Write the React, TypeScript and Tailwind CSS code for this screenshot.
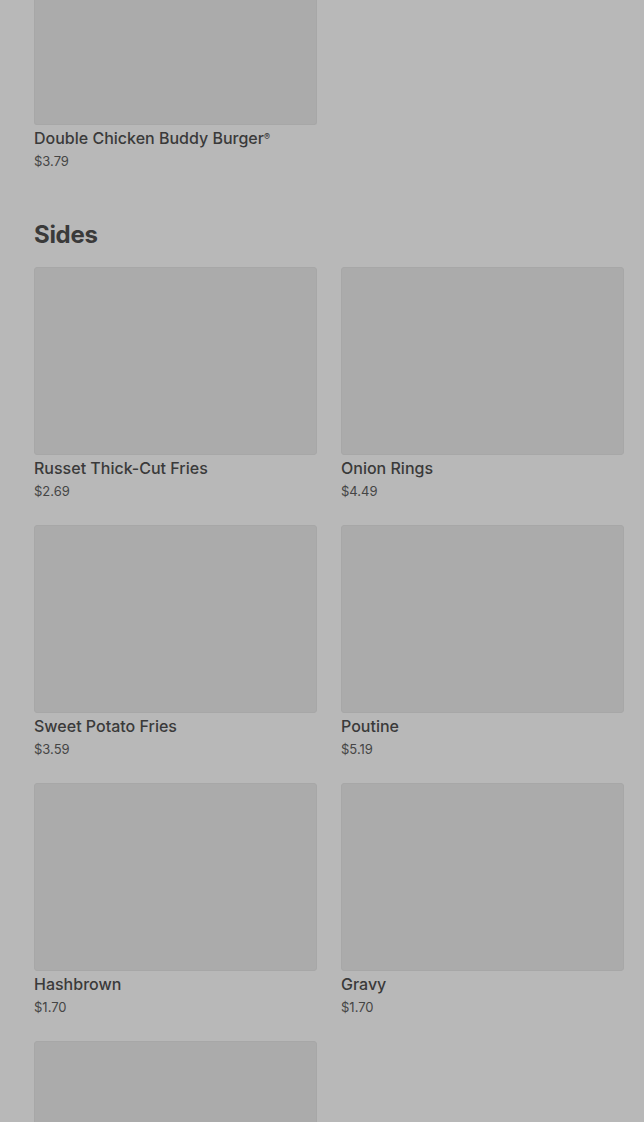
import React from "react";

type Item = { name?: string; price?: string };

const sides: Item[] = [
  { name: "Russet Thick-Cut Fries", price: "$2.69" },
  { name: "Onion Rings", price: "$4.49" },
  { name: "Sweet Potato Fries", price: "$3.59" },
  { name: "Poutine", price: "$5.19" },
  { name: "Hashbrown", price: "$1.70" },
  { name: "Gravy", price: "$1.70" },
  {}, // next item, label is below the fold
];

function ItemCard({ item }: { item: Item }) {
  return (
    <div className="flex flex-col">
      <div className="h-[188px] rounded-[3px] border border-[#a7a7a7] bg-[#ababab]" />
      {item.name && (
        <>
          <div className="mt-[3px] text-[16px] font-medium leading-5 text-[#3a3a3a]">
            {item.name}
          </div>
          <div className="mt-1 text-[13px] leading-[18px] text-[#454545]">
            {item.price}
          </div>
        </>
      )}
    </div>
  );
}

export default function App() {
  return (
    <div
      className="h-[1122px] overflow-hidden bg-[#b8b8b8] pl-[34px] pr-[20px]"
      style={{ fontFamily: "Inter, 'Noto Sans', sans-serif" }}
    >
      {/* previous section, scrolled out */}
      <div className="grid grid-cols-2 gap-x-6">
        <div className="flex flex-col">
          <div className="h-[125px] rounded-b-[3px] border border-t-0 border-[#a7a7a7] bg-[#ababab]" />
          <div className="mt-[3px] text-[16px] font-medium leading-5 text-[#3a3a3a]">
            Double Chicken Buddy Burger<sup className="text-[9px]">®</sup>
          </div>
          <div className="mt-1 text-[13px] leading-[18px] text-[#454545]">$3.79</div>
        </div>
      </div>

      <h2 className="mt-[49px] text-[24px] font-bold leading-8 tracking-[-0.3px] text-[#3a3a3a]">
        Sides
      </h2>

      <div className="mt-4 grid grid-cols-2 gap-x-6 gap-y-[25px]">
        {sides.map((s, i) => (
          <ItemCard key={i} item={s} />
        ))}
      </div>
    </div>
  );
}
